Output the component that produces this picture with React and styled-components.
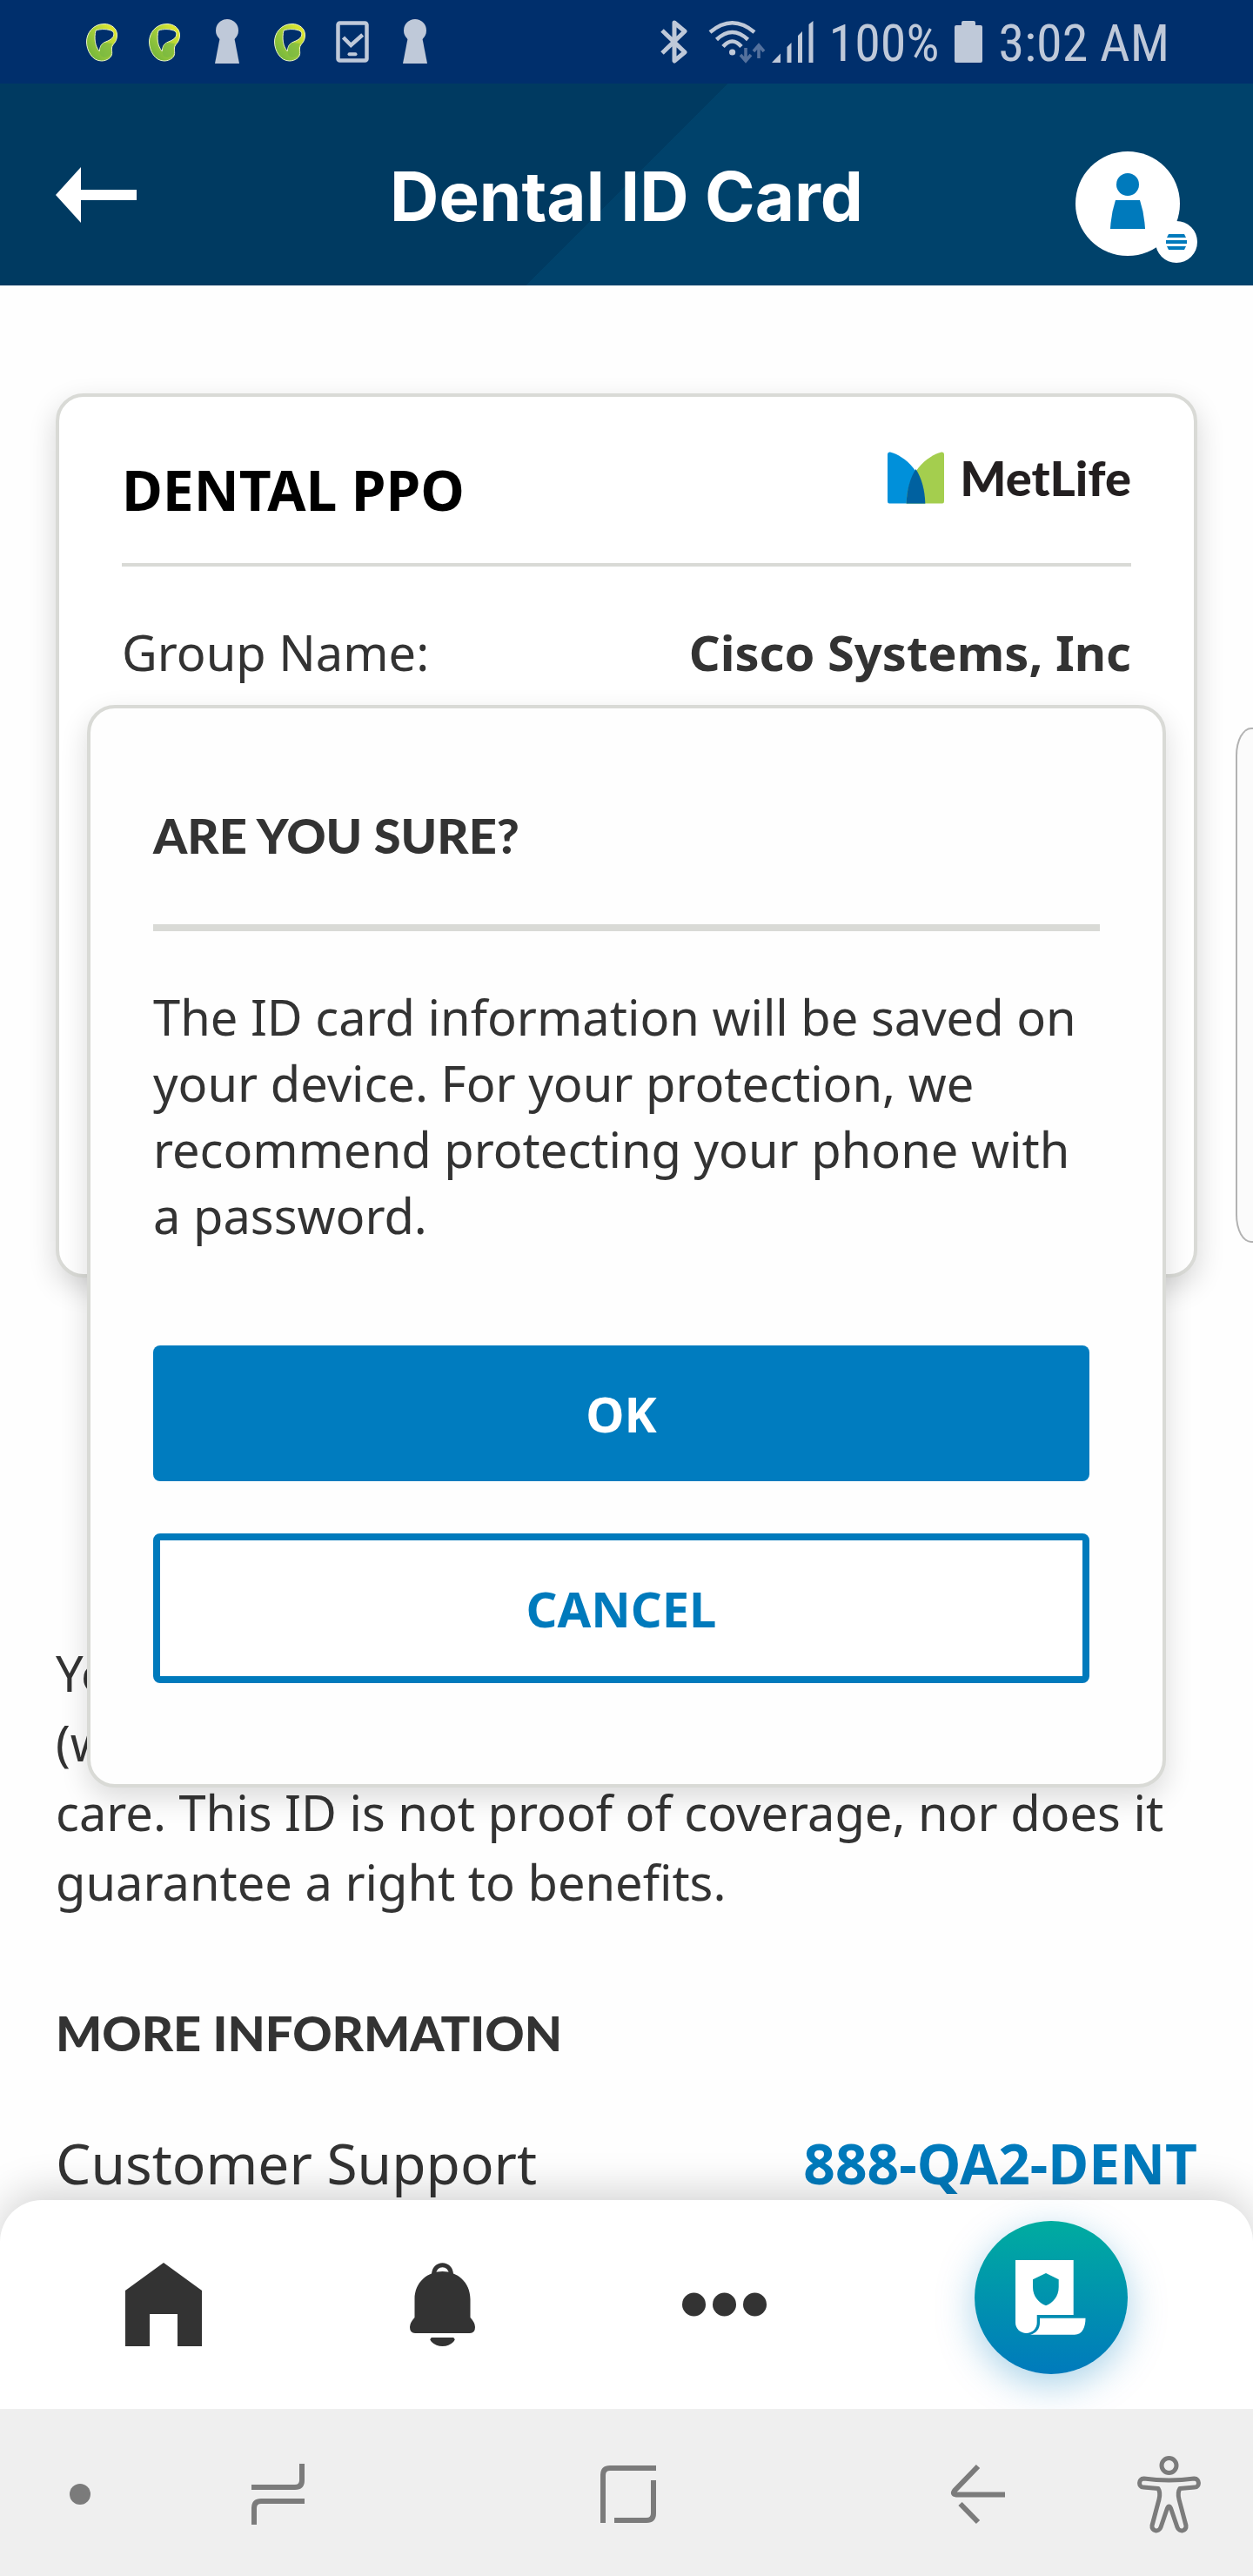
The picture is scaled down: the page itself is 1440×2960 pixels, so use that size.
import React from "react";
import styled, { createGlobalStyle } from "styled-components";

const GlobalStyle = createGlobalStyle`
  *, *::before, *::after { box-sizing: border-box; }
  body { margin: 0; background: #fefefe; }
  h1, h2, p, dl, dt, dd { margin: 0; font-size: inherit; font-weight: inherit; }
  button { margin: 0; padding: 0; border: 0; background: none; font: inherit; color: inherit; cursor: pointer; }
  svg { display: block; flex: none; overflow: visible; }
`;

const heading = `"Lato", "Open Sans", sans-serif`;
const body = `"Noto Sans", "Open Sans", sans-serif`;
const ink = "#333333";
const blue = "#007abc";
const line = "#d9dad6";

const Page = styled.div`
  display: flex;
  flex-direction: column;
  min-height: 100vh;
  color: ${ink};
  font-family: ${body};
  font-size: 56px;
  line-height: 76px;
`;

const StatusBar = styled.div`
  display: flex;
  align-items: center;
  justify-content: space-between;
  height: 96px;
  padding: 0 96px 0 81px;
  background: #002f6c;
  color: #bfc9d9;
`;

const StatusGroup = styled.div`
  display: flex;
  align-items: center;
  gap: ${(p) => p.$gap || 0}px;
`;

const StatusText = styled.span`
  padding-top: 4px;
  font-family: "Roboto Condensed", "Roboto", sans-serif;
  font-size: 60px;
  line-height: 72px;
  white-space: nowrap;
`;

const Screen = styled.div`
  position: relative;
  display: flex;
  flex: 1;
  flex-direction: column;
`;

const Header = styled.header`
  display: grid;
  grid-template-columns: 1fr auto 1fr;
  align-items: center;
  height: 232px;
  padding: 24px 64px 0;
  background: linear-gradient(135deg, #003a61 50%, #00426b 50%);
  color: #ffffff;
`;

const Title = styled.h1`
  padding-top: 4px;
  font-family: "Inter", "Roboto", sans-serif;
  font-size: 78px;
  font-weight: 700;
  line-height: 96px;
`;

const BackButton = styled.button`
  justify-self: start;
`;

const ProfileButton = styled.button`
  justify-self: end;
  margin-top: 28px;
`;

const Main = styled.main`
  flex: 1;
  padding: 124px 64px 0;
`;

const Card = styled.section`
  min-height: 1016px;
  padding: 63px 72px;
  border: 4px solid ${line};
  border-radius: 32px;
  background: #ffffff;
  box-shadow: 0 12px 32px rgba(0, 0, 0, 0.16);
`;

const CardHeader = styled.div`
  display: flex;
  justify-content: space-between;
  align-items: flex-start;
  padding-bottom: 40px;
  border-bottom: 4px solid ${line};
`;

const PlanName = styled.h2`
  color: #000000;
  font-size: 64px;
  font-weight: 700;
  line-height: 88px;
`;

const Brand = styled.div`
  display: flex;
  gap: 18px;
  color: #231f20;
  font-family: ${heading};
  font-size: 56px;
  font-weight: 900;
  line-height: 60px;
`;

const CardRow = styled.dl`
  display: flex;
  justify-content: space-between;
  padding-top: 60px;
`;

const RowValue = styled.dd`
  font-weight: 700;
`;

const Notice = styled.p`
  margin-top: 414px;
  line-height: 80px;
`;

const SectionTitle = styled.h2`
  margin-top: 98px;
  font-family: ${heading};
  font-weight: 900;
  line-height: 72px;
`;

const ContactRow = styled.div`
  display: flex;
  justify-content: space-between;
  padding-top: 74px;
  font-size: 64px;
  line-height: 80px;
`;

const PhoneLink = styled.a`
  color: ${blue};
  font-weight: 700;
  text-decoration: none;
`;

const TabBar = styled.nav`
  position: relative;
  display: flex;
  align-items: center;
  justify-content: space-between;
  height: 240px;
  padding: 0 144px;
  border-radius: 48px 48px 0 0;
  background: #ffffff;
  box-shadow: 0 -8px 48px rgba(0, 0, 0, 0.18);
  clip-path: inset(-80px 0 0 0);
`;

const TabButton = styled.button`
  color: ${ink};
`;

const CardTabButton = styled.button`
  width: 176px;
  height: 176px;
  margin-bottom: 16px;
  border-radius: 50%;
  background: linear-gradient(#00aca0, ${blue});
  box-shadow: 0 12px 44px rgba(0, 122, 188, 0.34);
`;

const EdgeHandle = styled.div`
  position: absolute;
  top: 740px;
  right: 0;
  width: 20px;
  height: 592px;
  border: 2px solid #b2b2b2;
  border-right: 0;
  border-radius: 18px 0 0 18px / 32px 0 0 32px;
  background: #fbfbfb;
`;

const Overlay = styled.div`
  position: absolute;
  inset: 0;
  display: flex;
  align-items: center;
  padding: 0 100px;
`;

const Dialog = styled.section`
  position: relative;
  flex: 1;
  padding: 110px 72px 116px;
  border: 4px solid ${line};
  border-radius: 32px;
  background: #fefefe;
  box-shadow: 0 12px 32px rgba(0, 0, 0, 0.14);
`;

const DialogTitle = styled.h2`
  padding-bottom: 66px;
  border-bottom: 8px solid ${line};
  font-family: ${heading};
  font-weight: 900;
  line-height: 72px;
`;

const DialogText = styled.p`
  padding-top: 60px;
`;

const Actions = styled.div`
  display: flex;
  flex-direction: column;
  gap: 60px;
  padding: 112px 12px 0 0;
`;

const ActionButton = styled.button`
  height: ${(p) => (p.$outline ? 172 : 156)}px;
  border: ${(p) => (p.$outline ? `8px solid ${blue}` : 0)};
  border-radius: 8px;
  background: ${(p) => (p.$outline ? "#ffffff" : "#007cbf")};
  color: ${(p) => (p.$outline ? blue : "#ffffff")};
  font-weight: 700;
`;

const FadedSheet = styled.div`
  position: absolute;
  top: 446px;
  right: 112px;
  left: 112px;
  display: flex;
  flex-direction: column;
  gap: 72px;
  padding: 0 80px;
  color: rgba(0, 0, 0, 0.016);
  font-size: 48px;
  pointer-events: none;
`;

const FadedCancel = styled.span`
  align-self: flex-end;
  font-size: 42px;
  font-weight: 700;
`;

const SystemBar = styled.nav`
  display: flex;
  align-items: center;
  height: 192px;
  padding: 4px 60px 0 80px;
  background: #efefef;
  color: #7b7b7b;
`;

const SystemKeys = styled.div`
  display: flex;
  flex: 1;
  align-items: center;
  justify-content: space-between;
  margin: 0 152px 0 185px;
`;

const LoopIcon = () => (
  <svg width="72" height="52" viewBox="0 0 72 52">
    <defs>
      <linearGradient id="loop" x1="0" y1="1" x2="1" y2="0">
        <stop offset="0.2" stopColor="#7dba3c" />
        <stop offset="0.5" stopColor="#a0cc3a" />
        <stop offset="0.85" stopColor="#dde52f" />
      </linearGradient>
    </defs>
    <path
      fillRule="evenodd"
      fill="url(#loop)"
      stroke="#eaf4c8"
      strokeWidth="1"
      d="M39 5.5C46 5.5 54 10 53.5 19C53 28 48 28 47.5 33C47 37 48.5 38 47 42C45 46 40 48 35.5 48C25 48 18.5 36 18.5 26C18.5 17 25 5.5 39 5.5ZM29 13C27 22 28 31 33.3 37C34 27 39 27 44 24.5C50 21.5 51 17 48.5 14C43 11 35 11 29 13Z"
    />
    <path fill="#74b544" d="M38 27C33 31 33 39 35 42C38 45 43 44 46 41C48 37 45 33 48 28Z" opacity="0.6" />
  </svg>
);

const KeyholeIcon = () => (
  <svg width="72" height="52" viewBox="0 0 72 52" fill="currentColor">
    <circle cx="36" cy="13" r="13" />
    <path d="M28 20H44L50 51H22Z" />
  </svg>
);

const PhoneCheckIcon = () => (
  <svg width="72" height="52" viewBox="0 0 72 52" fill="none" stroke="currentColor" strokeWidth="4.5">
    <rect x="19.5" y="4.5" width="33" height="43" rx="2" />
    <path d="M25.5 21L34.3 30L47.7 18" />
    <path d="M32.5 40.3H39.5" strokeLinecap="round" strokeWidth="4" />
  </svg>
);

const BluetoothIcon = () => (
  <svg width="37" height="50" viewBox="0 0 37 50" fill="none" stroke="currentColor" strokeWidth="5">
    <path strokeLinejoin="round" d="M2 12L28 37L16 47V3L28 13L2 38" />
  </svg>
);

const WifiIcon = () => (
  <svg width="55" height="48" viewBox="0 0 55 48" fill="none" stroke="currentColor" strokeWidth="4.5">
    <path d="M2 13Q27.6 -8.5 53 13" />
    <path d="M9.5 21.5Q27.6 4.5 45.5 21.5" />
    <path d="M17 29.5Q27.6 17.5 38 29.5" />
    <circle cx="27.6" cy="36" r="3.6" fill="currentColor" stroke="none" />
    <g stroke="#54719d" strokeWidth="3.6">
      <path d="M43 31V45M37 39L43 46L49 39" />
      <path d="M58 43V29M52 35L58 28L64 35" />
    </g>
  </svg>
);

const SignalIcon = () => (
  <svg width="48" height="48" viewBox="0 0 48 48" fill="currentColor">
    <path d="M0 48L10 37.5V48ZM17.5 48V30L22.5 25V48ZM30 48V17L35 12V48ZM42.5 48V4L47.5 0V48Z" />
  </svg>
);

const BatteryIcon = () => (
  <svg width="32" height="48" viewBox="0 0 32 48" fill="currentColor">
    <path d="M8 5V2Q8 0 10 0H22Q24 0 24 2V5H30Q32 5 32 7V46Q32 48 30 48H2Q0 48 0 46V7Q0 5 2 5Z" />
  </svg>
);

const ArrowIcon = () => (
  <svg width="93" height="64" viewBox="0 0 93 64" fill="currentColor">
    <path d="M0 32L29 0V26H93V38H29V64Z" />
  </svg>
);

const ProfileIcon = () => (
  <svg width="140" height="128" viewBox="0 0 140 128">
    <circle cx="60" cy="60" r="60" fill="#fff" />
    <circle cx="116" cy="104" r="24" fill="#fff" />
    <g fill={blue}>
      <circle cx="60" cy="38" r="13" />
      <path d="M46 56H74Q79 71 80 89H40Q41 71 46 56Z" />
      <path d="M107 95H125L127 99H105ZM104 102H128V106H104ZM105 109H127L125 113H107Z" />
    </g>
  </svg>
);

const BrandMark = () => (
  <svg width="65" height="60" viewBox="0 0 65 60">
    <path fill="#0090da" d="M0 3Q0 0 3 0.5C20 5 43 24 43.3 59.5H2Q0 59.5 0 57Z" />
    <path fill="#a4ce4e" d="M65 3Q65 0 62 0.5C45 5 22 24 21.7 59.5H63Q65 59.5 65 57Z" />
    <path fill="#0061a0" d="M32.5 20C26 30 22 44 21.7 59.5H43.3C43 44 39 30 32.5 20Z" />
  </svg>
);

const HomeIcon = () => (
  <svg width="88" height="96" viewBox="0 0 88 96" fill="currentColor">
    <path d="M44 0L88 32V96H60V59H28V96H0V32Z" />
  </svg>
);

const BellIcon = () => (
  <svg width="75" height="96" viewBox="0 0 75 96" fill="currentColor">
    <path fill="none" stroke="currentColor" strokeWidth="5" d="M27.5 14C27.5 -1 47.5 -1 47.5 14" />
    <path d="M37.5 10C54 10 69.5 22 69.5 42V63Q75 69 75 74Q75 81 69 81H6Q0 81 0 74Q0 69 5.5 63V42C5.5 22 21 10 37.5 10Z" />
    <path d="M25 86H50Q53 88 50 91Q45 96 37.5 96Q30 96 25 91Q22 88 25 86Z" />
  </svg>
);

const MoreIcon = () => (
  <svg width="97" height="28" viewBox="0 0 97 28" fill="currentColor">
    <circle cx="13.5" cy="14" r="13.5" />
    <circle cx="48.5" cy="14" r="13.5" />
    <circle cx="83.5" cy="14" r="13.5" />
  </svg>
);

const PolicyIcon = () => (
  <svg width="176" height="176" viewBox="0 0 176 176" fill="#fff">
    <path
      fillRule="evenodd"
      d="M47 45H113.7V108H71.7V117C71.7 124 66 129 59.5 129S47 124 47 117ZM82 60L67 67.3V76C67 87 74 94 82 97.3C90 94 96.7 87 96.7 76V67.3Z"
    />
    <path d="M75 111.7H127.5C127.5 122 124 130.7 115 130.7H64C71 129 75 124 75 117Z" />
  </svg>
);

const DotIcon = () => (
  <svg width="24" height="24" viewBox="0 0 24 24" fill="currentColor">
    <circle cx="12" cy="12" r="12" />
  </svg>
);

const RecentsIcon = () => (
  <svg width="61" height="70" viewBox="0 0 61 70" fill="none" stroke="currentColor" strokeWidth="6">
    <path d="M58 0V19Q58 27 50 27H0" />
    <path d="M3 70V51Q3 43 11 43H61" />
  </svg>
);

const SquareIcon = () => (
  <svg width="64" height="66" viewBox="0 0 64 66" fill="none" stroke="currentColor" strokeWidth="6">
    <path d="M3 66V11Q3 3 11 3H64" />
    <path d="M61 17V55Q61 63 53 63H16" />
  </svg>
);

const SystemBackIcon = () => (
  <svg width="62" height="68" viewBox="0 0 62 68" fill="none" stroke="currentColor" strokeWidth="6">
    <path d="M31 2L4 30Q1 34 6 34.5H62" />
    <path d="M10.5 45L31 66" />
  </svg>
);

const AccessibilityIcon = () => (
  <svg width="73" height="88" viewBox="0 0 73 88" fill="none" stroke="currentColor" strokeWidth="5">
    <circle cx="36.5" cy="11" r="8.5" />
    <path
      strokeLinejoin="round"
      d="M7.5 26Q22 28 36.5 28Q51 28 65.5 26C72 26 72 36 66 36L49 37.5Q46 42 48 50L56 80C57 87 48 88 46 82L38.5 60Q36.5 56 34.5 60L27 82C25 88 16 87 17 80L25 50Q27 42 24 37.5L7 36C1 36 1 26 7.5 26Z"
    />
  </svg>
);

export default function App() {
  return (
    <Page>
      <GlobalStyle />
      <StatusBar>
        <StatusGroup>
          <LoopIcon />
          <LoopIcon />
          <KeyholeIcon />
          <LoopIcon />
          <PhoneCheckIcon />
          <KeyholeIcon />
        </StatusGroup>
        <StatusGroup $gap={18}>
          <BluetoothIcon />
          <WifiIcon />
          <SignalIcon />
          <StatusText>100%</StatusText>
          <BatteryIcon />
          <StatusText>3:02 AM</StatusText>
        </StatusGroup>
      </StatusBar>

      <Screen>
        <Header>
          <BackButton type="button" aria-label="Back">
            <ArrowIcon />
          </BackButton>
          <Title>Dental ID Card</Title>
          <ProfileButton type="button" aria-label="Profile menu">
            <ProfileIcon />
          </ProfileButton>
        </Header>

        <Main>
          <Card>
            <CardHeader>
              <PlanName>DENTAL PPO</PlanName>
              <Brand>
                <BrandMark />
                MetLife
              </Brand>
            </CardHeader>
            <CardRow>
              <dt>Group Name:</dt>
              <RowValue>Cisco Systems, Inc</RowValue>
            </CardRow>
          </Card>

          <Notice>
            Yo
            <br />
            (w
            <br />
            care. This ID is not proof of coverage, nor does it guarantee a right to benefits.
          </Notice>

          <SectionTitle>MORE INFORMATION</SectionTitle>
          <ContactRow>
            <span>Customer Support</span>
            <PhoneLink href="tel:888-QA2-DENT">888-QA2-DENT</PhoneLink>
          </ContactRow>
        </Main>

        <TabBar aria-label="Main">
          <TabButton type="button" aria-label="Home">
            <HomeIcon />
          </TabButton>
          <TabButton type="button" aria-label="Notifications">
            <BellIcon />
          </TabButton>
          <TabButton type="button" aria-label="More">
            <MoreIcon />
          </TabButton>
          <CardTabButton type="button" aria-label="ID cards">
            <PolicyIcon />
          </CardTabButton>
        </TabBar>

        <EdgeHandle />

        <Overlay>
          <Dialog role="dialog" aria-modal="true" aria-labelledby="dialog-title">
            <DialogTitle id="dialog-title">ARE YOU SURE?</DialogTitle>
            <DialogText>
              The ID card information will be saved on your device. For your protection, we recommend
              protecting your phone with a password.
            </DialogText>
            <Actions>
              <ActionButton type="button">OK</ActionButton>
              <ActionButton type="button" $outline>
                CANCEL
              </ActionButton>
            </Actions>
            <FadedSheet aria-hidden="true">
              <span>Save to App</span>
              <span>Save to Photo Library</span>
              <FadedCancel>CANCEL</FadedCancel>
            </FadedSheet>
          </Dialog>
        </Overlay>
      </Screen>

      <SystemBar aria-label="System">
        <DotIcon />
        <SystemKeys>
          <button type="button" aria-label="Recent apps">
            <RecentsIcon />
          </button>
          <button type="button" aria-label="Home screen">
            <SquareIcon />
          </button>
          <button type="button" aria-label="System back">
            <SystemBackIcon />
          </button>
        </SystemKeys>
        <button type="button" aria-label="Accessibility">
          <AccessibilityIcon />
        </button>
      </SystemBar>
    </Page>
  );
}
